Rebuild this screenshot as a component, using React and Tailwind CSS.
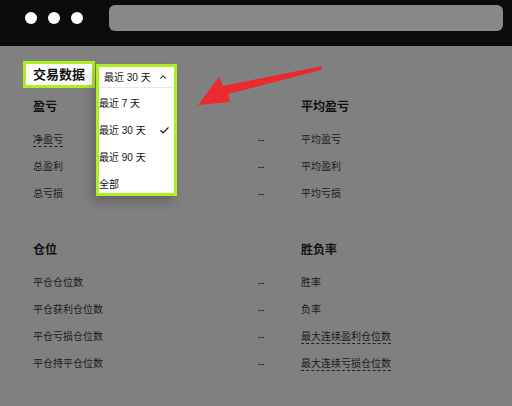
import { Check, ChevronUp } from 'lucide-react';

const font = { fontFamily: '"Liberation Sans", "Noto Sans CJK SC", sans-serif' };

const sections = [
  {
    left: { title: '盈亏', rows: [{ label: '净盈亏', dashed: true }, { label: '总盈利' }, { label: '总亏损' }] },
    right: { title: '平均盈亏', rows: [{ label: '平均盈亏' }, { label: '平均盈利' }, { label: '平均亏损' }] },
  },
  {
    left: { title: '仓位', rows: [{ label: '平仓仓位数' }, { label: '平仓获利仓位数' }, { label: '平仓亏损仓位数' }, { label: '平仓持平仓位数' }] },
    right: { title: '胜负率', rows: [{ label: '胜率' }, { label: '负率' }, { label: '最大连续盈利仓位数', dashed: true }, { label: '最大连续亏损仓位数', dashed: true }] },
  },
];

function Label({ row }) {
  return (
    <span className={row.dashed ? 'border-b border-dashed border-[#222] leading-[13px]' : 'leading-[13px]'}>
      {row.label}
    </span>
  );
}

// values of the right column fall outside the window, so only the left one shows them
function Column({ col, showValue }) {
  return (
    <div className="flex flex-col w-[234px] shrink-0">
      <div className="h-[20px] flex items-center text-[12px] font-bold text-[#111]">{col.title}</div>
      <div className="flex flex-col gap-[14px] mt-[16px]">
        {col.rows.map((row) => (
          <div key={row.label} className="h-[13px] flex items-center justify-between text-[10px] text-[#1c1c1c]">
            <Label row={row} />
            {showValue && <span className="w-[9px] text-[#222]">--</span>}
          </div>
        ))}
      </div>
    </div>
  );
}

export default function App() {
  return (
    <div className="w-[512px] h-[406px] overflow-hidden bg-[#808080]" style={font}>
      {/* window bar */}
      <div className="h-[46px] bg-[#0b0b0b] flex items-start pt-[5px] pl-[25px] pr-[9px]">
        <div className="flex gap-[11px] mt-[7px]">
          <div className="w-[12px] h-[12px] rounded-full bg-white" />
          <div className="w-[12px] h-[12px] rounded-full bg-white" />
          <div className="w-[12px] h-[12px] rounded-full bg-white" />
        </div>
        <div className="flex-1 ml-[26px] h-[26px] rounded-[6px] bg-[#888888]" />
      </div>

      <div className="relative pl-[33px] pt-[15px] pb-[10px]">
        {/* title */}
        <div className="flex">
          <div className="-ml-[10px] h-[27px] px-[7px] flex items-center bg-white border-[3px] border-[#aef01e] text-[13px] font-bold text-[#111]">
            交易数据
          </div>
        </div>

        <div className="flex flex-col gap-[40px] mt-[9px]">
          {sections.map((s, i) => (
            <div key={i} className="flex gap-[34px]">
              <Column col={s.left} showValue />
              <Column col={s.right} />
            </div>
          ))}
        </div>

        {/* dropdown */}
        <div className="absolute left-[96px] top-[18px] w-[81px] bg-white border-[3px] border-[#aef01e] shadow-[-4px_6px_10px_rgba(0,0,0,0.22)] text-[10px] text-[#111]">
          <div className="h-[21px] flex items-center pl-[5px] gap-[7px] border-b border-[#e8e8e8]">
            <span>最近 30 天</span>
            <ChevronUp className="w-[10px] h-[10px]" strokeWidth={2.5} />
          </div>
          <div className="flex flex-col pt-[2px]">
            <div className="h-[27px] flex items-center">最近 7 天</div>
            <div className="h-[27px] flex items-center justify-between pr-[4px]">
              <span>最近 30 天</span>
              <Check className="w-[11px] h-[11px]" strokeWidth={2.5} />
            </div>
            <div className="h-[27px] flex items-center">最近 90 天</div>
            <div className="h-[22px] flex items-center pt-[4px]">全部</div>
          </div>
        </div>

        {/* annotation arrow */}
        <svg className="absolute left-[190px] top-[12px]" width="140" height="60" viewBox="0 0 140 60">
          <path d="M132 8 L131 12 L38 36 L40 44 L8 47 L29 19 L33 28 Z" fill="#ea2a2e" />
        </svg>
      </div>
    </div>
  );
}
